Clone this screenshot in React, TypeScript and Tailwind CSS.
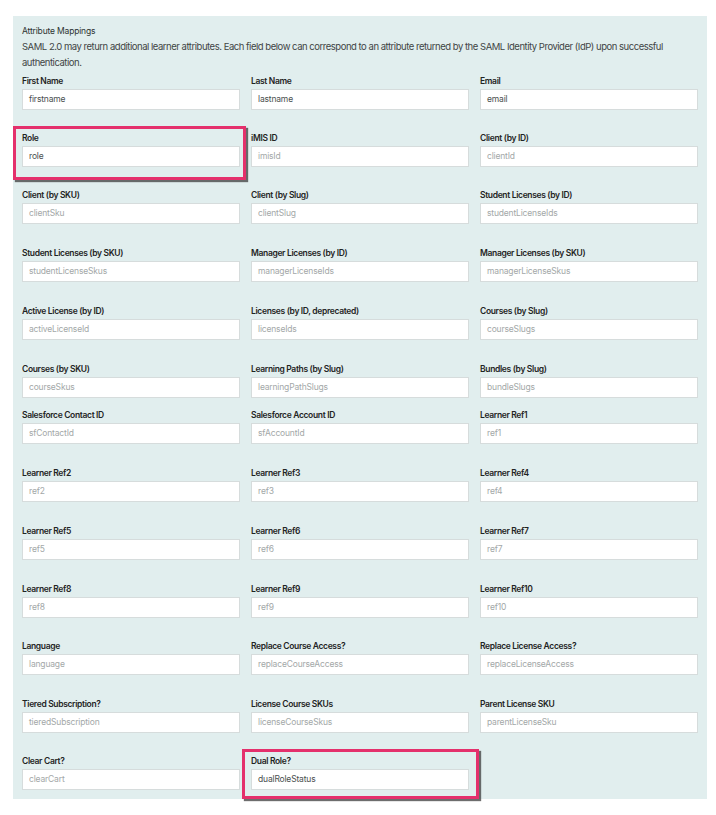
type Field = { label: string; value: string; filled?: boolean; mark?: 'role' | 'dual' };

const rows: { fields: Field[]; gap: string }[] = [
  { gap: 'mb-[21px]', fields: [
    { label: 'First Name', value: 'firstname', filled: true },
    { label: 'Last Name', value: 'lastname', filled: true },
    { label: 'Email', value: 'email', filled: true },
  ] },
  { gap: 'mb-[21px]', fields: [
    { label: 'Role', value: 'role', filled: true, mark: 'role' },
    { label: 'iMIS ID', value: 'imisId' },
    { label: 'Client (by ID)', value: 'clientId' },
  ] },
  { gap: 'mb-[22px]', fields: [
    { label: 'Client (by SKU)', value: 'clientSku' },
    { label: 'Client (by Slug)', value: 'clientSlug' },
    { label: 'Student Licenses (by ID)', value: 'studentLicenseIds' },
  ] },
  { gap: 'mb-[22px]', fields: [
    { label: 'Student Licenses (by SKU)', value: 'studentLicenseSkus' },
    { label: 'Manager Licenses (by ID)', value: 'managerLicenseIds' },
    { label: 'Manager Licenses (by SKU)', value: 'managerLicenseSkus' },
  ] },
  { gap: 'mb-[22px]', fields: [
    { label: 'Active License (by ID)', value: 'activeLicenseId' },
    { label: 'Licenses (by ID, deprecated)', value: 'licenseIds' },
    { label: 'Courses (by Slug)', value: 'courseSlugs' },
  ] },
  { gap: 'mb-[10px]', fields: [
    { label: 'Courses (by SKU)', value: 'courseSkus' },
    { label: 'Learning Paths (by Slug)', value: 'learningPathSlugs' },
    { label: 'Bundles (by Slug)', value: 'bundleSlugs' },
  ] },
  { gap: 'mb-[22px]', fields: [
    { label: 'Salesforce Contact ID', value: 'sfContactId' },
    { label: 'Salesforce Account ID', value: 'sfAccountId' },
    { label: 'Learner Ref1', value: 'ref1' },
  ] },
  { gap: 'mb-[22px]', fields: [
    { label: 'Learner Ref2', value: 'ref2' },
    { label: 'Learner Ref3', value: 'ref3' },
    { label: 'Learner Ref4', value: 'ref4' },
  ] },
  { gap: 'mb-[22px]', fields: [
    { label: 'Learner Ref5', value: 'ref5' },
    { label: 'Learner Ref6', value: 'ref6' },
    { label: 'Learner Ref7', value: 'ref7' },
  ] },
  { gap: 'mb-[21px]', fields: [
    { label: 'Learner Ref8', value: 'ref8' },
    { label: 'Learner Ref9', value: 'ref9' },
    { label: 'Learner Ref10', value: 'ref10' },
  ] },
  { gap: 'mb-[22px]', fields: [
    { label: 'Language', value: 'language' },
    { label: 'Replace Course Access?', value: 'replaceCourseAccess' },
    { label: 'Replace License Access?', value: 'replaceLicenseAccess' },
  ] },
  { gap: 'mb-[21px]', fields: [
    { label: 'Tiered Subscription?', value: 'tieredSubscription' },
    { label: 'License Course SKUs', value: 'licenseCourseSkus' },
    { label: 'Parent License SKU', value: 'parentLicenseSku' },
  ] },
  { gap: 'mb-0', fields: [
    { label: 'Clear Cart?', value: 'clearCart' },
    { label: 'Dual Role?', value: 'dualRoleStatus', filled: true, mark: 'dual' },
  ] },
];

function MappingField({ field }: { field: Field }) {
  return (
    <div className="relative">
      {field.mark === 'role' && (
        <div className="pointer-events-none absolute -left-[9px] -right-[6px] -top-[5px] -bottom-[13px] border-[3px] border-[#e4306c] shadow-[2px_2px_1px_rgba(60,60,60,0.75)] z-10" />
      )}
      {field.mark === 'dual' && (
        <div className="pointer-events-none absolute -left-[9px] -right-[10px] -top-[5px] -bottom-[9px] border-[3px] border-[#e4306c] shadow-[2px_2px_1px_rgba(60,60,60,0.75)] z-10" />
      )}
      <div className="h-[14px] leading-[14px] text-[8.5px] font-semibold tracking-[-0.04em] text-[#1f2424]">{field.label}</div>
      <div className="mt-px h-[21px] border border-[#d6dcdc] bg-white px-[6px] flex items-center">
        <span className={`text-[8.5px] tracking-[-0.02em] ${field.filled ? 'text-[#4a4f4f]' : 'text-[#a3a8a8]'}`}>{field.value}</span>
      </div>
    </div>
  );
}

export default function App() {
  return (
    <div className="min-h-screen bg-white pt-4 pl-[13px] pr-[9px] font-['Inter','Liberation_Sans',sans-serif]">
      <div className="bg-[#e1eeee] px-[9px] pt-[8px] pb-[9px]">
        <div className="text-[8.5px] leading-[15px] tracking-[-0.02em] text-[#2d3333]">Attribute Mappings</div>
        <p className="text-[9.5px] leading-[16px] tracking-[-0.05em] text-[#3f4545] whitespace-nowrap">
          SAML 2.0 may return additional learner attributes. Each field below can correspond to an attribute returned by the SAML Identity Provider (IdP) upon successful
          <br />
          authentication.
        </p>
        <div className="mt-[3px]">
          {rows.map((row, i) => (
            <div key={i} className={`grid grid-cols-3 gap-x-[11px] ${row.gap}`}>
              {row.fields.map(f => (
                <MappingField key={f.value} field={f} />
              ))}
            </div>
          ))}
        </div>
      </div>
    </div>
  );
}
